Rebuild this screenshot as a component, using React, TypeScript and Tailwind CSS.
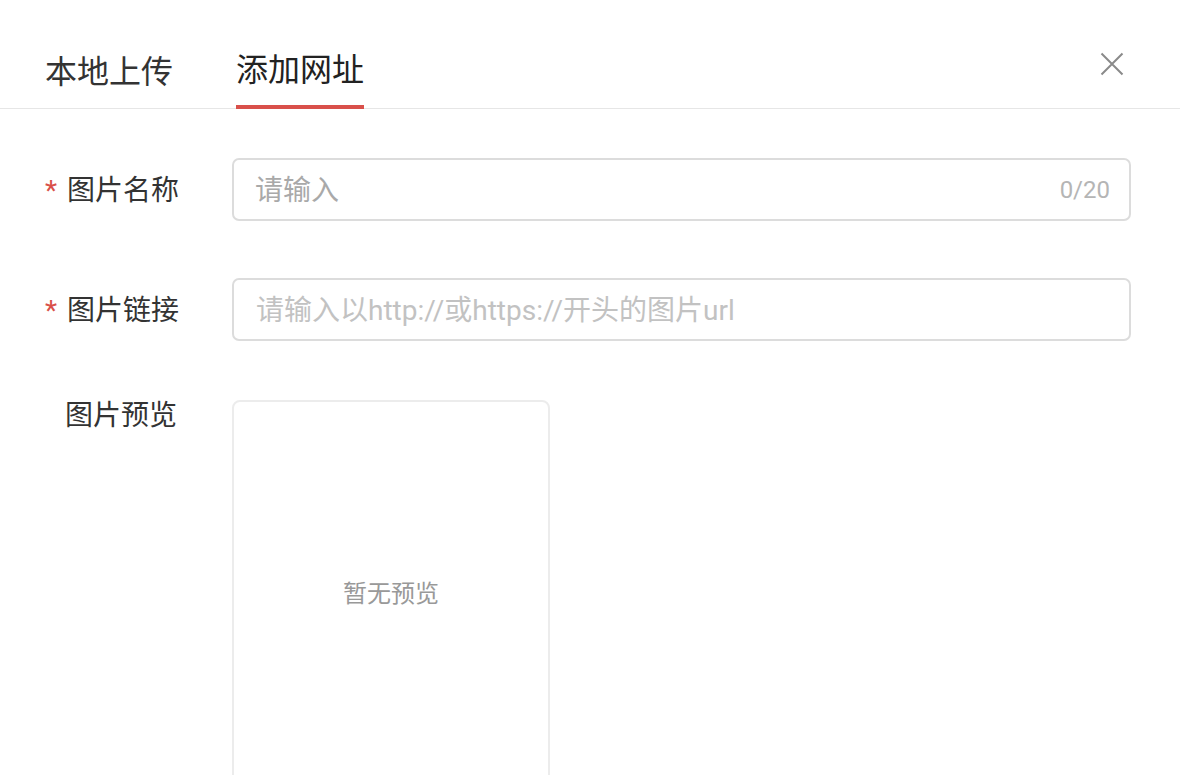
export default function App() {
  return (
    <div className="w-full h-[775px] overflow-hidden bg-white font-['Roboto','Noto_Sans_CJK_SC',sans-serif] text-[#333]">
      <header className="flex justify-between h-[109px] border-b border-[#e6e6e6] pl-[45px] pr-[56px]">
        <nav className="flex gap-[63px]">
          <button className="h-[109px] pt-[35px] text-[32px] leading-[38px] text-[#333] self-start">
            本地上传
          </button>
          <button className="h-[109px] pt-[35px] text-[32px] leading-[38px] text-[#222] border-b-4 border-[#d9504a] self-start">
            添加网址
          </button>
        </nav>
        <button className="mt-[52px] self-start w-6 h-6">
          <svg viewBox="0 0 24 24" className="w-6 h-6" fill="none" stroke="#8a8a8a" strokeWidth="2">
            <path d="M1.5 1.5 22.5 22.5M22.5 1.5 1.5 22.5" />
          </svg>
        </button>
      </header>

      <form className="pl-[45px] pt-[49px]">
        <div className="flex items-center">
          <label className="w-[187px] flex items-center pt-[3px] text-[28px] leading-[32px]">
            <span className="w-[22px] text-[#d9504a]">*</span>
            图片名称
          </label>
          <div className="flex items-center w-[899px] h-[63px] border-2 border-[#dcdcdc] rounded-[7px] pl-[21px] pr-[19px]">
            <input
              className="flex-1 outline-none text-[28px] pt-[3px] placeholder:text-[#a9a9a9]"
              placeholder="请输入"
            />
            <span className="text-[24px] text-[#b5b5b5]">0/20</span>
          </div>
        </div>

        <div className="flex items-center mt-[57px]">
          <label className="w-[187px] flex items-center pt-[3px] text-[28px] leading-[32px]">
            <span className="w-[22px] text-[#d9504a]">*</span>
            图片链接
          </label>
          <div className="flex items-center w-[899px] h-[63px] border-2 border-[#dcdcdc] rounded-[7px] pl-[22px] pr-[19px]">
            <input
              className="flex-1 outline-none text-[28px] pt-[2px] placeholder:text-[#c2c2c2]"
              placeholder="请输入以http://或https://开头的图片url"
            />
          </div>
        </div>

        <div className="flex items-start mt-[59px]">
          <label className="w-[187px] pl-[20px] text-[28px] leading-[32px]">图片预览</label>
          <div className="flex items-center justify-center w-[318px] h-[388px] border-2 border-[#ececec] rounded-[8px]">
            <span className="text-[24px] text-[#999]">暂无预览</span>
          </div>
        </div>
      </form>
    </div>
  );
}
